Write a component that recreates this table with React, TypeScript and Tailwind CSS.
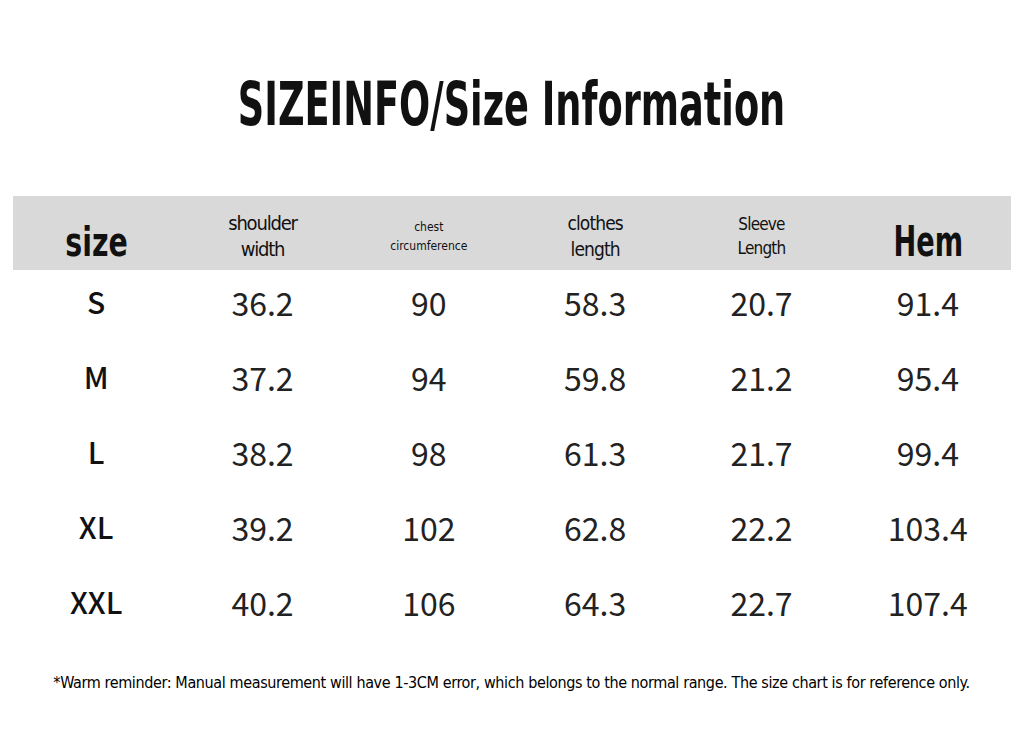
import React from 'react';

const rows = [
  ['S', '36.2', '90', '58.3', '20.7', '91.4'],
  ['M', '37.2', '94', '59.8', '21.2', '95.4'],
  ['L', '38.2', '98', '61.3', '21.7', '99.4'],
  ['XL', '39.2', '102', '62.8', '22.2', '103.4'],
  ['XXL', '40.2', '106', '64.3', '22.7', '107.4'],
];

const cond = "font-['DejaVu_Sans_Condensed','Liberation_Sans_Narrow',sans-serif]";

export default function App() {
  return (
    <div className="w-[1024px] h-[754px] bg-white flex flex-col text-[#111]">
      <div className={`${cond} h-[196px] pt-[66px] flex justify-center`}>
        <h1 className="inline-block text-[60px] font-bold leading-[76px] whitespace-nowrap scale-x-[0.68]">
          SIZEINFO/Size Information
        </h1>
      </div>

      <div className={`${cond} mx-[13px] h-[74px] bg-[#d9d9d9] grid grid-cols-6 items-center text-center`}>
        <div className="pt-[14px]">
          <span className="inline-block text-[40px] font-bold scale-x-[0.79]">size</span>
        </div>
        <div className="text-[20px] leading-[26px] pt-[2px] tracking-[-1.2px]">shoulder<br />width</div>
        <div className="text-[12px] leading-[19px] pt-[4px]">chest<br />circumference</div>
        <div className="text-[19px] leading-[26px] pt-[2px] tracking-[-0.9px]">clothes<br />length</div>
        <div className="text-[17px] leading-[24px] pt-[2px] tracking-[-0.8px]">Sleeve<br />Length</div>
        <div className="pt-[14px]">
          <span className="inline-block text-[42px] font-bold scale-x-[0.72]">Hem</span>
        </div>
      </div>

      <div className="mx-[13px] mt-[-6px] font-['Noto_Sans_CJK_SC','Noto_Sans',sans-serif]">
        {rows.map(r => (
          <div key={r[0]} className="grid grid-cols-6 h-[75px] items-center text-center">
            <div className="text-[30px] font-medium">{r[0]}</div>
            {r.slice(1).map((v, i) => (
              <div key={i} className="text-[32px] font-normal text-[#222]">{v}</div>
            ))}
          </div>
        ))}
      </div>

      <p className={`${cond} text-[16px] text-center mt-[32px] ml-[-1px] tracking-[-0.38px] whitespace-nowrap text-black`}>
        *Warm reminder: Manual measurement will have 1-3CM error, which belongs to the normal range. The size chart is for reference only.
      </p>
    </div>
  );
}
